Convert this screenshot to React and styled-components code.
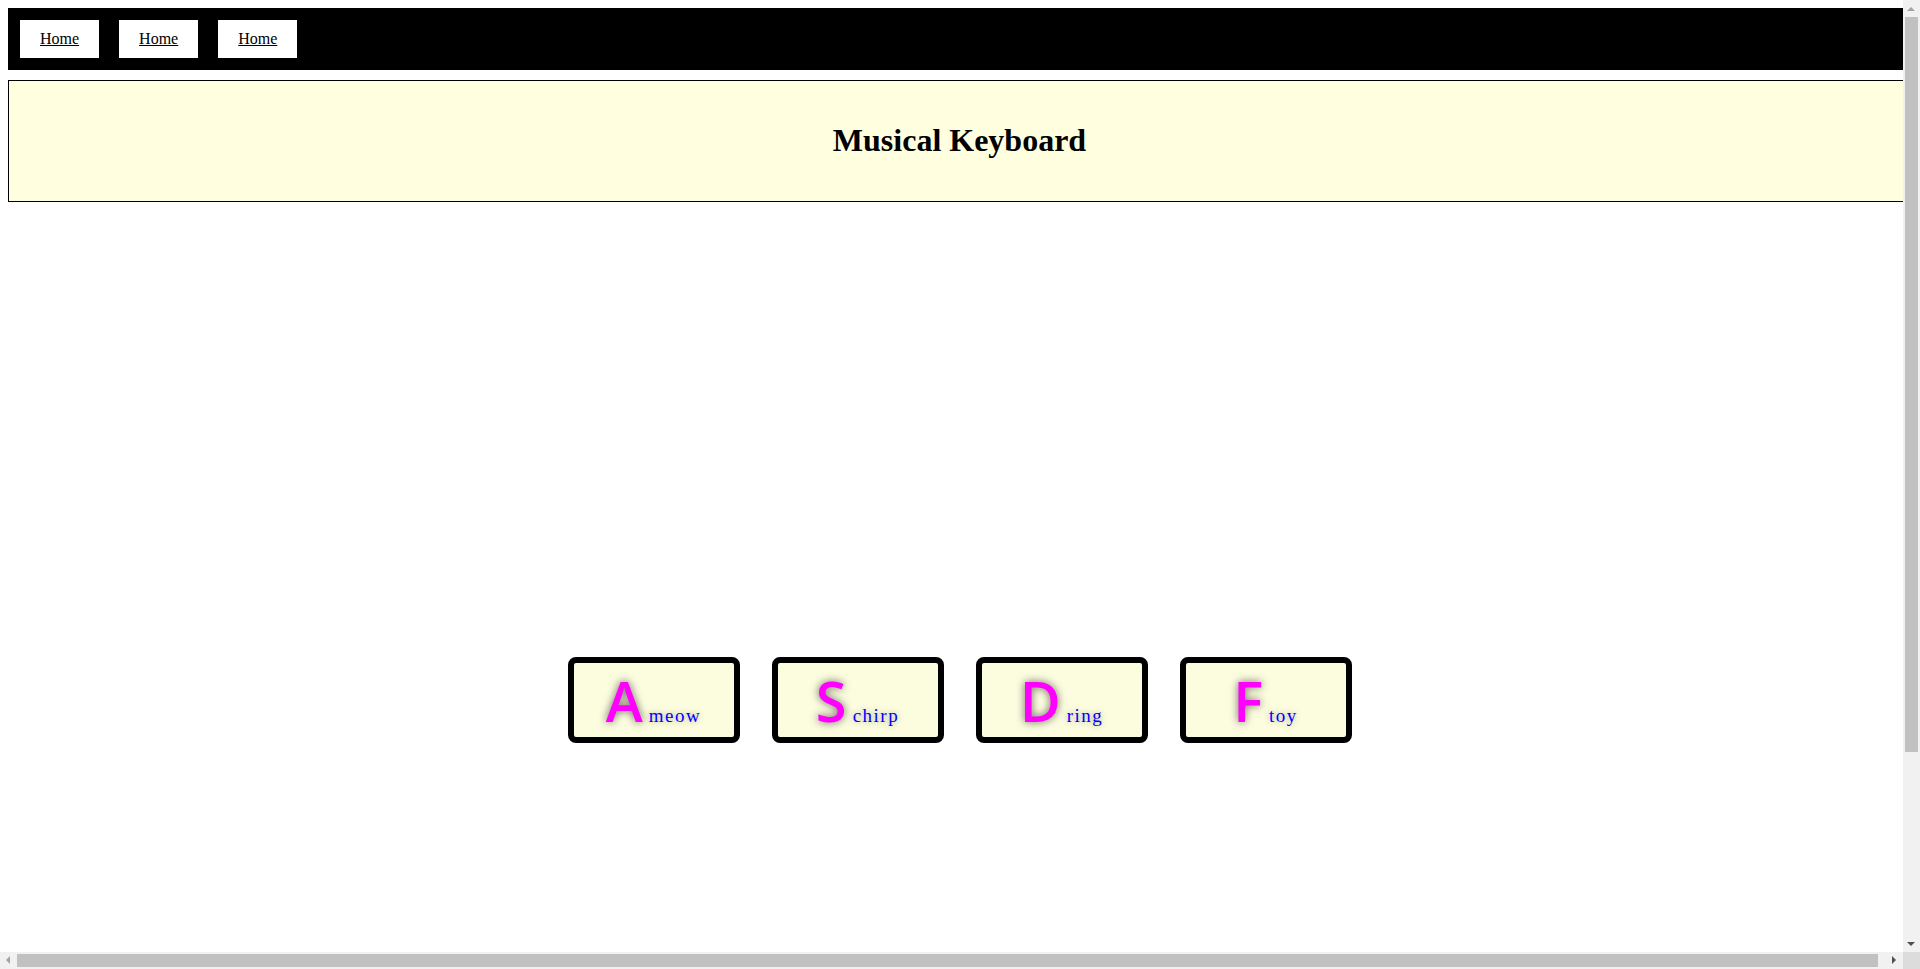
import styled, { createGlobalStyle } from "styled-components";

const GlobalStyle = createGlobalStyle`
  body {
    margin: 8px;
    font-family: "Liberation Serif", "Times New Roman", serif;
    background: #ffffff;
  }
`;

// the page was laid out in a 1903px wide viewport (scrollbar taken off)
const Page = styled.div`
  width: 1887px;
`;

const Nav = styled.nav`
  display: flex;
  gap: 20px;
  width: 100%;
  padding: 12px 4px 12px 12px;
  background: #000000;
`;

const NavLink = styled.a`
  display: block;
  padding: 10px 20px;
  line-height: 18px;
  font-size: 16px;
  color: #000000;
  background: #ffffff;
  text-decoration: underline;
`;

const Header = styled.header`
  width: 100%;
  margin-top: 10px;
  padding: 20px 7px;
  border: 1px solid #000000;
  background: #ffffe0;
  text-align: center;

  h1 {
    margin: 21.44px 0;
    font-size: 32px;
    font-weight: bold;
    line-height: 37px;
  }
`;

const Keys = styled.div`
  display: flex;
  align-items: center;
  justify-content: center;
  width: 100%;
  min-height: 100vh;
  margin-top: 14px;
  padding: 0 8px;
`;

const Key = styled.div`
  display: flex;
  align-items: baseline;
  justify-content: center;
  width: 160px;
  margin: 16px;
  border: 6.4px solid #000000;
  border-radius: 8px;
  background: #fcfcdf;
`;

const Letter = styled.kbd`
  font-family: "Open Sans", "DejaVu Sans", sans-serif;
  font-size: 56px;
  font-weight: 600;
  line-height: 74px;
  color: #ff00ff;
  text-shadow: 0 0 8px rgba(0, 0, 0, 0.6);
`;

const Sound = styled.span`
  margin-left: 6px;
  font-family: "Liberation Serif", serif;
  font-size: 19px;
  line-height: 1;
  letter-spacing: 1.5px;
  color: #0000ff;
  text-shadow: 0 0 6px rgba(0, 0, 0, 0.35);
`;

const VScroll = styled.div`
  position: fixed;
  top: 0;
  right: 0;
  width: 17px;
  height: calc(100vh - 17px);
  background: #f1f1f1;
`;

const HScroll = styled.div`
  position: fixed;
  left: 0;
  bottom: 0;
  width: calc(100vw - 17px);
  height: 17px;
  background: #f1f1f1;
`;

const Corner = styled.div`
  position: fixed;
  right: 0;
  bottom: 0;
  width: 17px;
  height: 17px;
  background: #dcdcdc;
`;

const Thumb = styled.div`
  position: absolute;
  background: #c1c1c1;
  ${(p) =>
    p.$vertical
      ? "left: 2px; width: 13px; top: 17px; height: 735px;"
      : "top: 2px; height: 13px; left: 17px; width: 1861px;"}
`;

const Arrow = styled.div`
  position: absolute;
  width: 0;
  height: 0;
  ${(p) => {
    const c = p.$dim ? "#a3a3a3" : "#505050";
    switch (p.$dir) {
      case "up":
        return `top: 7px; left: 4px; border-left: 4px solid transparent; border-right: 4px solid transparent; border-bottom: 4px solid ${c};`;
      case "down":
        return `bottom: 6px; left: 4px; border-left: 4px solid transparent; border-right: 4px solid transparent; border-top: 4px solid ${c};`;
      case "left":
        return `left: 6px; top: 4px; border-top: 4px solid transparent; border-bottom: 4px solid transparent; border-right: 4px solid ${c};`;
      default:
        return `right: 7px; top: 4px; border-top: 4px solid transparent; border-bottom: 4px solid transparent; border-left: 4px solid ${c};`;
    }
  }}
`;

const keys = [
  { letter: "A", sound: "meow" },
  { letter: "S", sound: "chirp" },
  { letter: "D", sound: "ring" },
  { letter: "F", sound: "toy" },
];

export default function App() {
  return (
    <>
      <GlobalStyle />
      <Page>
        <Nav>
          <NavLink href="#">Home</NavLink>
          <NavLink href="#">Home</NavLink>
          <NavLink href="#">Home</NavLink>
        </Nav>
        <Header>
          <h1>Musical Keyboard</h1>
        </Header>
        <Keys>
          {keys.map((k) => (
            <Key key={k.letter}>
              <Letter>{k.letter}</Letter>
              <Sound>{k.sound}</Sound>
            </Key>
          ))}
        </Keys>
      </Page>
      <VScroll>
        <Arrow $dir="up" $dim />
        <Thumb $vertical />
        <Arrow $dir="down" />
      </VScroll>
      <HScroll>
        <Arrow $dir="left" $dim />
        <Thumb />
        <Arrow $dir="right" />
      </HScroll>
      <Corner />
    </>
  );
}
